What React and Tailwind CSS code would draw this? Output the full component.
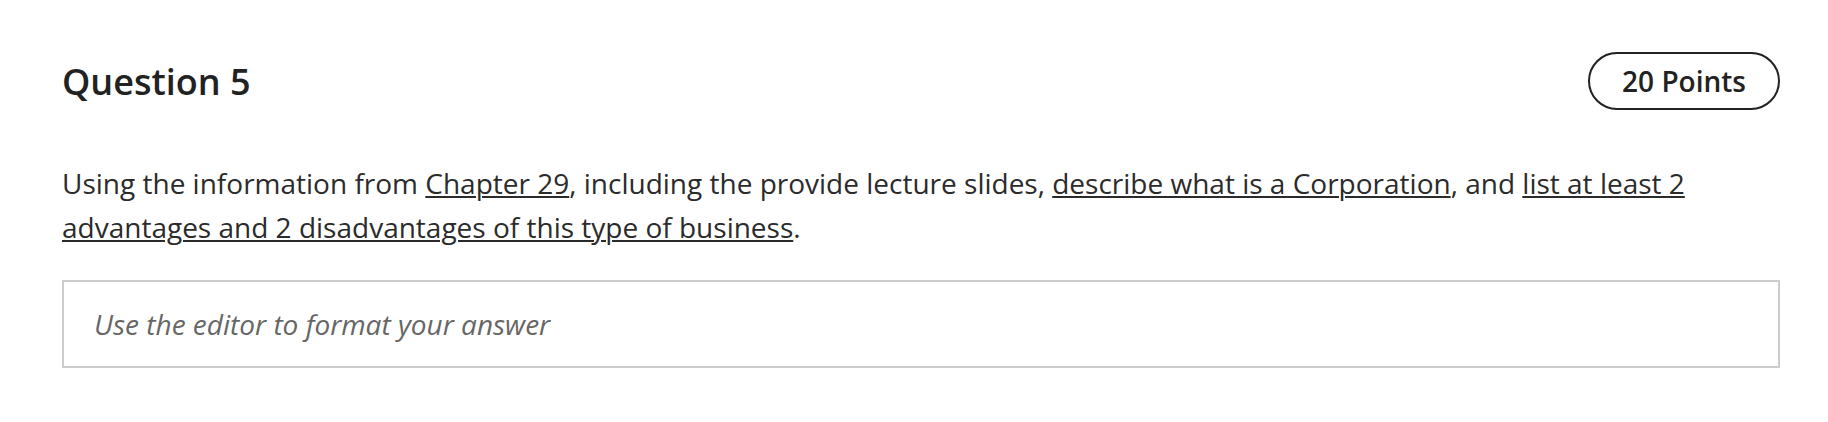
export default function App() {
  return (
    <div
      className="min-h-[422px] bg-white pl-[62px] pr-[48px] pt-[52px] text-[#2b2b2b]"
      style={{ fontFamily: '"Open Sans", "Noto Sans", sans-serif' }}
    >
      {/* header */}
      <div className="flex items-center justify-between">
        <h2 className="text-[36px] font-semibold leading-[49px] text-[#222]">Question 5</h2>
        <span className="flex h-[58px] items-center rounded-full border-2 border-[#222] px-[32px] text-[28px] font-semibold text-[#222]">
          20 Points
        </span>
      </div>

      {/* question text */}
      <p className="mt-[51px] text-[28px] leading-[44px]">
        Using the information from <u className="decoration-2 underline-offset-2">Chapter 29</u>, including the provide
        lecture slides, <u className="decoration-2 underline-offset-2">describe what is a Corporation</u>, and{" "}
        <u className="decoration-2 underline-offset-2">list at least 2 advantages and 2 disadvantages of this type of business</u>.
      </p>

      {/* answer box */}
      <div className="mt-[31px] border-2 border-[#cccccc] px-[30px] py-[21px] text-[28px] leading-[42px] italic text-[#666]">
        Use the editor to format your answer
      </div>
    </div>
  );
}
